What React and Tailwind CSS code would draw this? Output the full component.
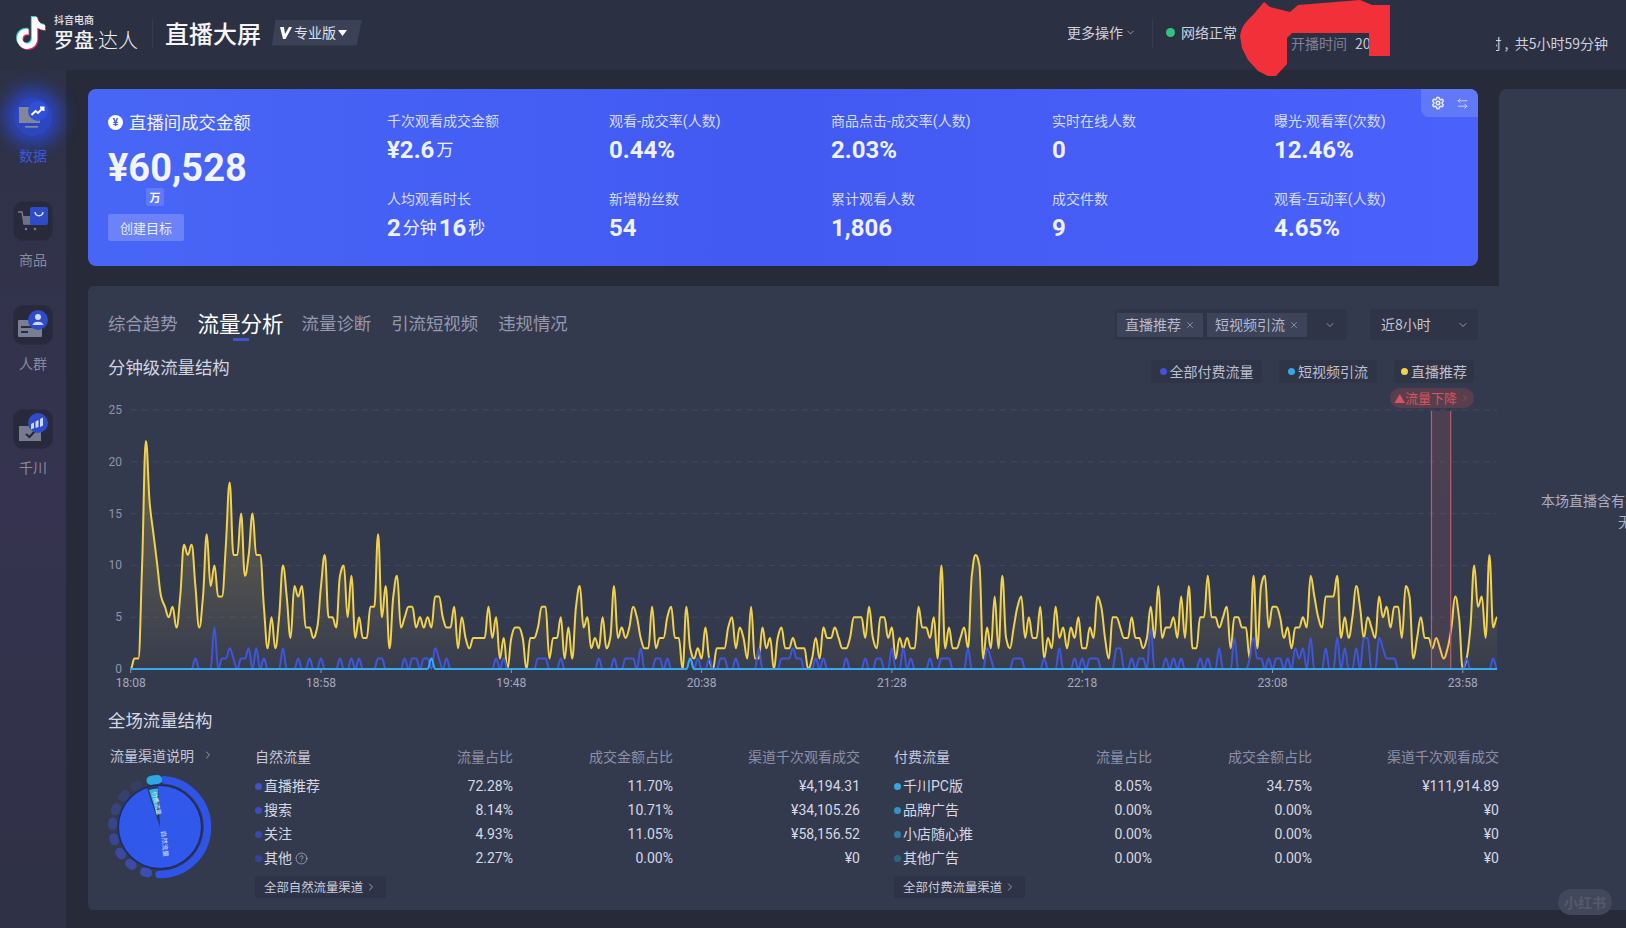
import React from "react";
import { FaTiktok } from "react-icons/fa6";
import { ChevronDown, ChevronRight, X, Settings, ArrowLeftRight, HelpCircle } from "lucide-react";

const YELLOW = [
0,1,1,10,22,16,13,10,7,6,5,6,4,7,12,11,12,8,4,7,
13,8,10,7,7,12,18,11,11,15,9,11,15,11,11,6,2,5,2,5,
10,7,3,8,7,8,4,4,3,4,8,11,5,5,4,9,10,5,9,3,
5,3,3,6,6,13,5,8,2,7,9,4,5,6,6,4,5,4,5,4,
7,7,5,4,4,6,2,5,3,2,3,3,3,3,6,3,5,1,3,0,
3,4,4,3,0,3,3,4,6,6,1,3,3,5,1,4,1,6,8,4,
5,2,3,2,5,2,3,8,3,4,3,4,6,5,3,2,2,6,2,3,
3,5,6,3,3,0,6,2,1,2,1,4,1,0,2,2,2,4,5,2,
4,3,1,6,1,1,4,2,3,0,3,4,2,2,3,2,2,2,0,1,
3,1,4,3,3,4,3,2,2,3,5,5,5,3,6,3,2,5,5,3,
4,1,3,2,3,2,2,6,4,4,3,5,1,10,2,4,2,2,3,4,
2,9,11,10,1,4,2,7,2,9,3,2,4,6,7,3,5,3,3,6,
1,3,2,6,3,4,2,4,3,5,2,2,4,3,7,6,3,1,5,5,
4,3,3,5,3,3,2,3,6,3,8,3,4,4,5,3,7,3,8,2,
2,5,5,9,5,5,4,5,6,2,5,5,4,4,1,9,2,8,9,4,
6,6,5,3,4,2,4,4,5,4,9,7,5,4,7,7,7,9,3,5,
3,5,8,6,3,5,4,3,7,5,6,4,6,6,3,8,7,1,3,5,
3,3,2,3,2,1,2,4,7,5,0,1,4,10,6,7,3,11,4,5,
];

const BLUE_PAIRS = [[17,1],[22,4],[24,1],[25,1],[26,2],[27,1],[29,1],[30,1],[31,2],[33,2],[35,1],[40,2],[44,1],[47,1],[50,1],[55,1],[58,1],[60,1],[65,1],[66,1],[72,1],[74,1],[75,1],[77,1],[78,1],[80,2],[81,1],[83,1],[96,1],[98,1],[107,1],[108,1],[109,1],[113,1],[123,1],[127,1],[130,1],[131,1],[132,1],[134,2],[138,1],[139,1],[141,1],[147,1],[149,1],[152,1],[155,1],[156,1],[159,1],[165,2],[171,1],[172,1],[173,1],[174,2],[175,1],[176,1],[180,1],[182,1],[188,1],[193,1],[196,1],[197,1],[200,2],[203,2],[205,1],[210,1],[213,1],[214,1],[215,1],[220,2],[225,2],[226,1],[232,1],[233,1],[234,1],[240,1],[244,2],[248,1],[250,1],[252,1],[253,1],[254,1],[259,2],[260,2],[263,1],[265,1],[266,1],[268,4],[272,1],[274,1],[276,1],[281,1],[283,1],[286,2],[290,3],[294,1],[295,3],[296,1],[297,1],[299,1],[301,1],[302,1],[304,1],[306,2],[307,1],[308,2],[310,3],[314,2],[317,3],[319,2],[322,2],[324,3],[325,3],[328,3],[329,2],[330,1],[331,1],[332,1],[351,1],[358,1]];
const BLUE = Array.from({ length: 360 }, () => 0);
BLUE_PAIRS.forEach(([i, v]) => { BLUE[i] = v; });
const CYAN = Array.from({ length: 360 }, () => 0);
CYAN[79] = 1; CYAN[147] = 1;

const X0 = 22.7, DX = 3.806, Y0 = 281, UNIT = 10.36;
const px = (i) => X0 + i * DX;
const py = (v) => Y0 - v * UNIT;

function smoothPath(data) {
  const pts = data.map((v, i) => [px(i), py(v)]);
  const n = pts.length;
  const s = pts.map((p, i) => {
    if (i === 0 || i === n - 1) return 0;
    const a = (p[1] - pts[i - 1][1]) / DX;
    const b = (pts[i + 1][1] - p[1]) / DX;
    if (a * b <= 0) return 0;
    return (2 * a * b) / (a + b);
  });
  let d = `M${pts[0][0].toFixed(1)} ${pts[0][1].toFixed(1)}`;
  for (let i = 0; i < n - 1; i++) {
    const h = DX / 2.4;
    d += `C${(pts[i][0] + h).toFixed(1)} ${(pts[i][1] + s[i] * h).toFixed(1)} ${(pts[i + 1][0] - h).toFixed(1)} ${(pts[i + 1][1] - s[i + 1] * h).toFixed(1)} ${pts[i + 1][0].toFixed(1)} ${pts[i + 1][1].toFixed(1)}`;
  }
  return d;
}

function Chart() {
  const y = smoothPath(YELLOW);
  const b = smoothPath(BLUE);
  const c = smoothPath(CYAN);
  const endX = px(359);
  return (
    <svg width="1391" height="307" viewBox="0 0 1391 307" className="block">
      <defs>
        <linearGradient id="areaY" x1="0" y1="0" x2="0" y2="1">
          <stop offset="0" stopColor="#f4d34a" stopOpacity="0.3" />
          <stop offset="1" stopColor="#f4d34a" stopOpacity="0.02" />
        </linearGradient>
        <linearGradient id="band" x1="0" y1="0" x2="0" y2="1">
          <stop offset="0" stopColor="#e2606c" stopOpacity="0.14" />
          <stop offset="1" stopColor="#e2606c" stopOpacity="0.1" />
        </linearGradient>
      </defs>
      {[5, 10, 15, 20, 25].map((v) => (
        <line key={v} x1={X0} x2={endX} y1={py(v)} y2={py(v)} stroke="#42485e" strokeDasharray="6 5" strokeWidth="1" />
      ))}
      {[0, 5, 10, 15, 20, 25].map((v) => (
        <text key={v} x="14" y={py(v) + 4} textAnchor="end" fill="#8f94aa" className="font-['Roboto',sans-serif] text-[12px]">{v}</text>
      ))}
      {["18:08", "18:58", "19:48", "20:38", "21:28", "22:18", "23:08", "23:58"].map((t, i) => (
        <g key={t}>
          <line x1={X0 + i * 50 * DX} x2={X0 + i * 50 * DX} y1={Y0} y2={Y0 + 4} stroke="#8f94aa" />
          <text x={X0 + i * 50 * DX} y={Y0 + 18} textAnchor="middle" fill="#a5a9bd" className="font-['Roboto',sans-serif] text-[12px]">{t}</text>
        </g>
      ))}
      <path d={`${y}L${endX} ${Y0}L${X0} ${Y0}Z`} fill="url(#areaY)" />
      <path d={y} fill="none" stroke="#f0d24d" strokeWidth="2" />
      <path d={b} fill="none" stroke="#3e56dc" strokeWidth="2" />
      <rect x="1323.5" y="23" width="19" height={Y0 - 23} fill="url(#band)" />
      <line x1="1323.5" x2="1323.5" y1="23" y2={Y0} stroke="#b9606c" strokeWidth="1.2" />
      <line x1="1342.7" x2="1342.7" y1="23" y2={Y0} stroke="#b9606c" strokeWidth="1.2" />
      <path d={c} fill="none" stroke="#38a9ea" strokeWidth="2" />
    </svg>
  );
}

function arc(cx, cy, r, a0, a1) {
  const p = (a) => [cx + r * Math.sin((a * Math.PI) / 180), cy - r * Math.cos((a * Math.PI) / 180)];
  const [x0, y0] = p(a0);
  const [x1, y1] = p(a1);
  return `M${x0.toFixed(2)} ${y0.toFixed(2)}A${r} ${r} 0 ${a1 - a0 > 180 ? 1 : 0} 1 ${x1.toFixed(2)} ${y1.toFixed(2)}`;
}

function Donut() {
  const dots = [[197, 0.95], [218, 0.85], [236, 0.75], [255, 0.65], [274, 0.55], [292, 0.45], [311, 0.35], [330, 0.2]];
  return (
    <svg width="112" height="112" viewBox="0 0 112 112" className="block">
      <circle cx="56" cy="56" r="42.5" fill="#1b2a6c" />
      <circle cx="56" cy="56" r="41" fill="#3058ea" />
      <path d="M56 56L43 17.5A41 41 0 0 1 54 15Z" fill="#263a5c" />
      <path d="M53 44L45 19A39 39 0 0 1 54 17.5Z" fill="#3ab0df" />
      <path d={arc(56, 56, 47.5, 5, 181)} fill="none" stroke="#2f55e8" strokeWidth="7.5" strokeLinecap="round" />
      <path d={arc(56, 56, 47.5, 349, 357)} fill="none" stroke="#2ca8e2" strokeWidth="9" strokeLinecap="round" />
      {dots.map(([a, o]) => (
        <path key={a} d={arc(56, 56, 47.5, a - 2, a + 2)} fill="none" stroke="#3c4fb8" strokeOpacity={o} strokeWidth="9" strokeLinecap="round" />
      ))}
      <text transform="translate(48 21) rotate(78)" fill="#dff1fb" className="text-[6px]">付费流量</text>
      <text transform="translate(57 60) rotate(84)" fill="#dbe4ff" className="text-[6.5px]">自然流量</text>
    </svg>
  );
}

function Tile({ active, children }) {
  return (
    <div className={active ? "relative flex h-[38px] w-[38px] items-center justify-center rounded-full bg-[#2c46bd] shadow-[0_0_16px_10px_#2b44b8]" : "flex h-[38px] w-[38px] items-center justify-center rounded-[9px] bg-[#282a3c] shadow-[0_0_0_1px_#2b2d40]"}>
      {children}
    </div>
  );
}

const DataIcon = () => (
  <svg width="32" height="32" viewBox="0 0 32 32">
    <rect x="2" y="6" width="21" height="16" fill="#82869a" />
    <rect x="8" y="25" width="13" height="1.6" fill="#8a8ea2" />
    <circle cx="21" cy="10" r="10" fill="#2f50d8" />
    <path d="M14.5 14L18.5 10L21 12L26 7M23 6.5H26.5V10" stroke="#fff" strokeWidth="2" fill="none" />
  </svg>
);
const CartIcon = () => (
  <svg width="32" height="32" viewBox="0 0 32 32">
    <path d="M1 7H5L7 19H20" stroke="#777b8e" strokeWidth="1.4" fill="none" />
    <rect x="6" y="11" width="14" height="8" fill="#6e7286" />
    <circle cx="9" cy="24" r="1.3" fill="#777b8e" />
    <circle cx="18" cy="24" r="1.3" fill="#777b8e" />
    <rect x="13" y="2" width="18" height="18" rx="2" fill="#2e4bc9" />
    <path d="M18 7C18.5 12 25.5 12 26 7" stroke="#dfe5ff" strokeWidth="1.4" fill="none" />
  </svg>
);
const PeopleIcon = () => (
  <svg width="32" height="32" viewBox="0 0 32 32">
    <rect x="1" y="11" width="24" height="17" rx="1" fill="#7a7e92" />
    <rect x="4" y="17" width="11" height="2" fill="#2a2c3e" />
    <rect x="4" y="22" width="7" height="2" fill="#2a2c3e" />
    <circle cx="21" cy="11" r="10" fill="#2e4bc9" />
    <circle cx="21" cy="8" r="3" fill="#cfd8ff" />
    <path d="M15.5 16C16 11.5 26 11.5 26.5 16Z" fill="#cfd8ff" />
  </svg>
);
const QianIcon = () => (
  <svg width="32" height="32" viewBox="0 0 32 32">
    <rect x="2" y="13" width="22" height="15" fill="#777b8e" />
    <path d="M9 21L12.5 24L18 18" stroke="#23253a" strokeWidth="2" fill="none" />
    <circle cx="21" cy="10" r="10" fill="#2e4bc9" />
    <path d="M14 11L17 9.5V15L14 16.5ZM18.5 8.5L21.5 7V14L18.5 15ZM23 6L26 4.5V12.5L23 14Z" fill="#cfd8ff" />
  </svg>
);

function NavItem({ icon, label, active }) {
  return (
    <div className="flex flex-col items-center gap-[9px]">
      <Tile active={active}>{icon}</Tile>
      <div className={active ? "h-[20px] text-[14px] leading-[20px] text-[#3f5ae0]" : "h-[20px] text-[14px] leading-[20px] text-[#878a9d]"}>{label}</div>
    </div>
  );
}

function Metric({ label, children }) {
  return (
    <div>
      <div className="h-[20px] text-[14px] leading-[20px] text-[#d3dbff]">{label}</div>
      <div className="mt-[3px] flex h-[32px] items-center text-[24px] font-bold leading-[32px] text-[#eef1ff]">{children}</div>
    </div>
  );
}
const Unit = ({ children }) => <span className="mx-[2px] text-[17px] font-normal">{children}</span>;

const NUM = "font-['Roboto','Noto_Sans_CJK_SC',sans-serif]";

function FlowTable({ title, rows, dots, link, help }) {
  return (
    <div className="w-[605px]">
      <div className="grid h-[24px] grid-cols-[150px_108px_160px_187px] items-center text-[14px] text-[#8b90a8]">
        <div className="text-[#c4c8d8]">{title}</div>
        <div className="text-right">流量占比</div>
        <div className="text-right">成交金额占比</div>
        <div className="text-right">渠道千次观看成交</div>
      </div>
      <div className="mt-[6px]">
        {rows.map((r, i) => (
          <div key={r[0]} className={`grid h-[24px] grid-cols-[150px_108px_160px_187px] items-center text-[14px] text-[#d5d8e4] ${NUM}`}>
            <div className="flex items-center gap-[2px]">
              <span className="h-[7px] w-[7px] rounded-full" style={{ background: dots[i] }} />
              <span>{r[0]}</span>
              {help && i === 3 && <HelpCircle size={13} strokeWidth={1.4} className="ml-[1px] text-[#b0b4c4]" />}
            </div>
            <div className="text-right">{r[1]}</div>
            <div className="text-right">{r[2]}</div>
            <div className="text-right">{r[3]}</div>
          </div>
        ))}
      </div>
      <div className="mt-[6px] flex h-[22px] w-fit items-center gap-[2px] rounded-[2px] bg-[#2e3347] px-[9px] text-[12.4px] text-[#c9ccda]">
        {link}
        <ChevronRight size={12} strokeWidth={1.4} />
      </div>
    </div>
  );
}

export default function App() {
  return (
    <div className="relative h-[928px] w-[1626px] overflow-hidden bg-[#272a39] font-['Noto_Sans_CJK_SC','Noto_Sans',sans-serif]">
      {/* Header */}
      <header className="relative flex h-[70px] items-center bg-[#2c3043] pb-[5px] pl-[15px]">
        <div className="relative h-[32px] w-[30px] text-[#fff]">
          <FaTiktok size={32} className="absolute -left-[1px] -top-[1px] text-[#2fd6d2]" />
          <FaTiktok size={32} className="absolute left-[1px] top-[1px] text-[#e2305c]" />
          <FaTiktok size={32} className="absolute left-0 top-0 text-white" />
        </div>
        <div className="ml-[9px] flex flex-col">
          <div className="text-[10px] font-medium leading-[13px] text-[#e6e8f0]">抖音电商</div>
          <div className="mt-[1px] flex items-center text-[20px] leading-[25px] text-[#f1f2f6]">
            <span className="font-medium">罗盘</span>
            <span className="flex w-[4px] justify-center"><span className="h-[2px] w-[2px] rounded-full bg-[#cfd2de]" /></span>
            <span className="font-light">达人</span>
          </div>
        </div>
        <div className="ml-[14px] h-[28px] w-px bg-[#363b50]" />
        <div className="ml-[12px] text-[24px] font-medium text-[#f7f7fa]">直播大屏</div>
        <div className="ml-[11px] flex h-[26px] w-[90px] items-center gap-[2px] bg-[#3b4157] pl-[7px] text-[14px] text-[#dfe1ea] [clip-path:polygon(4%_0,100%_0,94%_100%,0_100%)]">
          <svg width="13" height="13" viewBox="0 0 13 13"><path d="M1 1H5L6 8L10 1H13L6.5 13H4Z" fill="#fff" /></svg>
          <span>专业版</span>
          <svg width="9" height="6" viewBox="0 0 9 6"><path d="M0 0H9L4.5 6Z" fill="#fff" /></svg>
        </div>

        <div className="ml-auto flex w-[559px] shrink-0 items-center text-[14px] text-[#cfd2de]">
          <div className="flex w-[85px] items-center gap-[2px] whitespace-nowrap">更多操作<ChevronDown size={11} strokeWidth={1.4} /></div>
          <div className="h-[28px] w-px bg-[#363b50]" />
          <div className="ml-[13px] h-[9px] w-[9px] rounded-full bg-[#33c27f]" />
          <div className="ml-[6px] whitespace-nowrap">网络正常</div>
          <div className="ml-[54px] mt-[22px] whitespace-nowrap text-[#7d8197]">开播时间<span className="ml-[8px] text-[#c4c7d4]">20</span></div>
          <div className="ml-auto mr-[18px] mt-[22px] flex items-center whitespace-nowrap">
            <span className="flex w-[6px] justify-end overflow-hidden">时</span>
            <span className="ml-[3px]">,&nbsp;&nbsp;共5小时59分钟</span>
          </div>
        </div>
        <svg width="150" height="80" viewBox="0 0 150 80" className="absolute left-[1240px] top-0">
          <path d="M0 36C2 24 8 20 13 15L24 2L30 7L50 12L58 5L120 0L132 5L150 5V56H129V33H52L47 38V64L36 76L28 76L18 71L8 60L2 48Z" fill="#f2303a" />
        </svg>
      </header>

      <div className="flex h-[858px]">
        {/* Sidebar */}
        <aside className="flex w-[66px] shrink-0 flex-col items-center gap-[37px] bg-gradient-to-b from-[#2e3247] via-[#35334f] to-[#2f3146] pt-[28px]">
          <NavItem active icon={<DataIcon />} label="数据" />
          <NavItem icon={<CartIcon />} label="商品" />
          <NavItem icon={<PeopleIcon />} label="人群" />
          <NavItem icon={<QianIcon />} label="千川" />
        </aside>

        {/* Main */}
        <main className="min-w-0 flex-1 pl-[22px] pt-[19px]">
          <div className="flex">
            <div className="shrink-0 pb-[20px]">
              <section className="relative flex h-[177px] w-[1390px] rounded-[8px] bg-gradient-to-r from-[#4866f6] via-[#4259f2] to-[#4a62fb] text-white">
                <div className="w-[299px] shrink-0 pl-[20px] pt-[22px]">
                  <div className="flex h-[22px] items-center gap-[6px] text-[17.4px] text-[#eef1ff]">
                    <span className={`flex h-[15px] w-[15px] items-center justify-center rounded-full bg-white text-[10px] font-bold text-[#4259f2] ${NUM}`}>¥</span>
                    直播间成交金额
                  </div>
                  <div className={`mt-[16px] h-[39px] text-[38px] font-bold leading-[39px] text-[#f2f4ff] ${NUM}`}>¥60,528</div>
                  <div className="ml-[38px] flex h-[18px] w-[18px] items-center justify-center rounded-[2px] bg-[#5f79f8] text-[11px] font-bold">万</div>
                  <div className="mt-[8px] flex h-[27px] w-[76px] items-center justify-center rounded-[2px] bg-[#6b82f8] text-[13px] text-[#e9edff]">创建目标</div>
                </div>
                <div className={`grid grid-cols-[222px_222px_221px_222px_1fr] content-start gap-y-[23px] pt-[22px] ${NUM}`}>
                  <Metric label="千次观看成交金额">¥2.6<Unit>万</Unit></Metric>
                  <Metric label="观看-成交率(人数)">0.44%</Metric>
                  <Metric label="商品点击-成交率(人数)">2.03%</Metric>
                  <Metric label="实时在线人数">0</Metric>
                  <Metric label="曝光-观看率(次数)">12.46%</Metric>
                  <Metric label="人均观看时长">2<Unit>分钟</Unit>16<Unit>秒</Unit></Metric>
                  <Metric label="新增粉丝数">54</Metric>
                  <Metric label="累计观看人数">1,806</Metric>
                  <Metric label="成交件数">9</Metric>
                  <Metric label="观看-互动率(人数)">4.65%</Metric>
                </div>
                <div className="absolute right-0 top-0 flex h-[28px] w-[57px] items-center justify-around rounded-bl-[8px] rounded-tr-[8px] bg-[#6179f8] px-[4px] text-[#e7ebff]">
                  <Settings size={14} strokeWidth={2.6} />
                  <ArrowLeftRight size={13} strokeWidth={1.4} />
                </div>
              </section>
            </div>
            <div className="ml-[21px] flex-1 rounded-tl-[8px] bg-[#343a4e]" />
          </div>

          <section className="flex h-[624px] rounded-bl-[6px] rounded-tl-[6px] bg-[#343a4e] pl-[20px]">
            <div className="w-[1391px] shrink-0">
              <div className="flex h-[54px] items-end justify-between pr-[21px]">
                <div className="flex h-[33px] items-center text-[17.4px] text-[#9498b0]">
                  <span>综合趋势</span>
                  <span className="relative ml-[20px] text-[21.5px] text-white">
                    流量分析
                    <span className="absolute left-[35px] top-[31px] h-[3px] w-[16px] bg-[#3f55c9]" />
                  </span>
                  <span className="ml-[18px]">流量诊断</span>
                  <span className="ml-[20px]">引流短视频</span>
                  <span className="ml-[20px]">违规情况</span>
                </div>
                <div className="flex items-center text-[14px] text-[#b6b9cb]">
                  <div className="flex h-[31px] w-[232px] items-center gap-[4px] rounded-[3px] bg-[#2f3447] px-[2px]">
                    <span className="flex h-[24px] w-[86px] items-center justify-center gap-[4px] bg-[#3d4359]">直播推荐<X size={10} strokeWidth={1.4} /></span>
                    <span className="flex h-[24px] w-[100px] items-center justify-center gap-[4px] bg-[#3d4359]">短视频引流<X size={10} strokeWidth={1.4} /></span>
                    <ChevronDown size={12} strokeWidth={1.4} className="ml-auto mr-[9px]" />
                  </div>
                  <div className="ml-[23px] flex h-[31px] w-[108px] items-center justify-between rounded-[3px] bg-[#2f3447] pl-[11px] pr-[9px] text-[#c2c5d4]">
                    近8小时<ChevronDown size={12} strokeWidth={1.4} />
                  </div>
                </div>
              </div>

              <div className="flex h-[48px] items-start justify-between">
                <div className="mt-[17px] text-[17.4px] leading-[20px] text-[#d0d3e0]">分钟级流量结构</div>
                <div className="mr-[25px] mt-[20px] flex items-center gap-[17px] text-[14px] text-[#bcbfce]">
                  <div className="flex h-[23px] w-[111px] items-center justify-center gap-[3px] rounded-[4px] bg-[#2f3447]"><span className="h-[7px] w-[7px] rounded-full bg-[#4154d8]" />全部付费流量</div>
                  <div className="flex h-[23px] w-[98px] items-center justify-center gap-[3px] rounded-[4px] bg-[#2f3447]"><span className="h-[7px] w-[7px] rounded-full bg-[#34a9e6]" />短视频引流</div>
                  <div className="flex h-[23px] w-[80px] items-center justify-center gap-[3px] rounded-[4px] bg-[#2f3447]"><span className="h-[7px] w-[7px] rounded-full bg-[#f0d24d]" />直播推荐</div>
                </div>
              </div>

              <div className="relative h-[307px]">
                <Chart />
                <div className="absolute left-[1282px] top-0 flex h-[20px] w-[84px] items-center justify-center rounded-full bg-[#593e4d] text-[13px] text-[#d5545f]">
                  <span className="text-[11px]">▲</span>流量下降<ChevronRight size={10} strokeWidth={1.2} className="ml-[3px]" />
                </div>
              </div>

              <div className="mt-[14px] text-[17.4px] leading-[22px] text-[#d5d8e4]">全场流量结构</div>

              <div className="mt-[13px] flex">
                <div className="w-[147px] shrink-0">
                  <div className="-mt-[1px] flex h-[24px] items-center gap-[8px] pl-[2px] text-[14px] text-[#c4c7d6]">流量渠道说明<ChevronRight size={12} strokeWidth={1.4} /></div>
                  <div className="-ml-[4px] mt-[4px]"><Donut /></div>
                </div>
                <FlowTable
                  title="自然流量"
                  help
                  link="全部自然流量渠道"
                  dots={["#4052cf", "#3c4cc0", "#3947b0", "#36429c"]}
                  rows={[
                    ["直播推荐", "72.28%", "11.70%", "¥4,194.31"],
                    ["搜索", "8.14%", "10.71%", "¥34,105.26"],
                    ["关注", "4.93%", "11.05%", "¥58,156.52"],
                    ["其他", "2.27%", "0.00%", "¥0"],
                  ]}
                />
                <div className="ml-[34px]">
                  <FlowTable
                    title="付费流量"
                    link="全部付费流量渠道"
                    dots={["#37a6e2", "#3492c6", "#2f7ba3", "#2a6680"]}
                    rows={[
                      ["千川PC版", "8.05%", "34.75%", "¥111,914.89"],
                      ["品牌广告", "0.00%", "0.00%", "¥0"],
                      ["小店随心推", "0.00%", "0.00%", "¥0"],
                      ["其他广告", "0.00%", "0.00%", "¥0"],
                    ]}
                  />
                </div>
              </div>
            </div>
            <div className="w-[294px] shrink-0 pt-[204px] text-center text-[14px] leading-[21px] text-[#a9adc0]">
              <div>本场直播含有不可分析的流量数据</div>
              <div>无法查看</div>
            </div>
          </section>
        </main>
      </div>

      <div className="absolute left-[1558px] top-[889px] flex h-[26px] w-[54px] items-center justify-center rounded-full bg-[#42475a] text-[14px] font-bold text-[#545a6c]">小红书</div>
    </div>
  );
}
